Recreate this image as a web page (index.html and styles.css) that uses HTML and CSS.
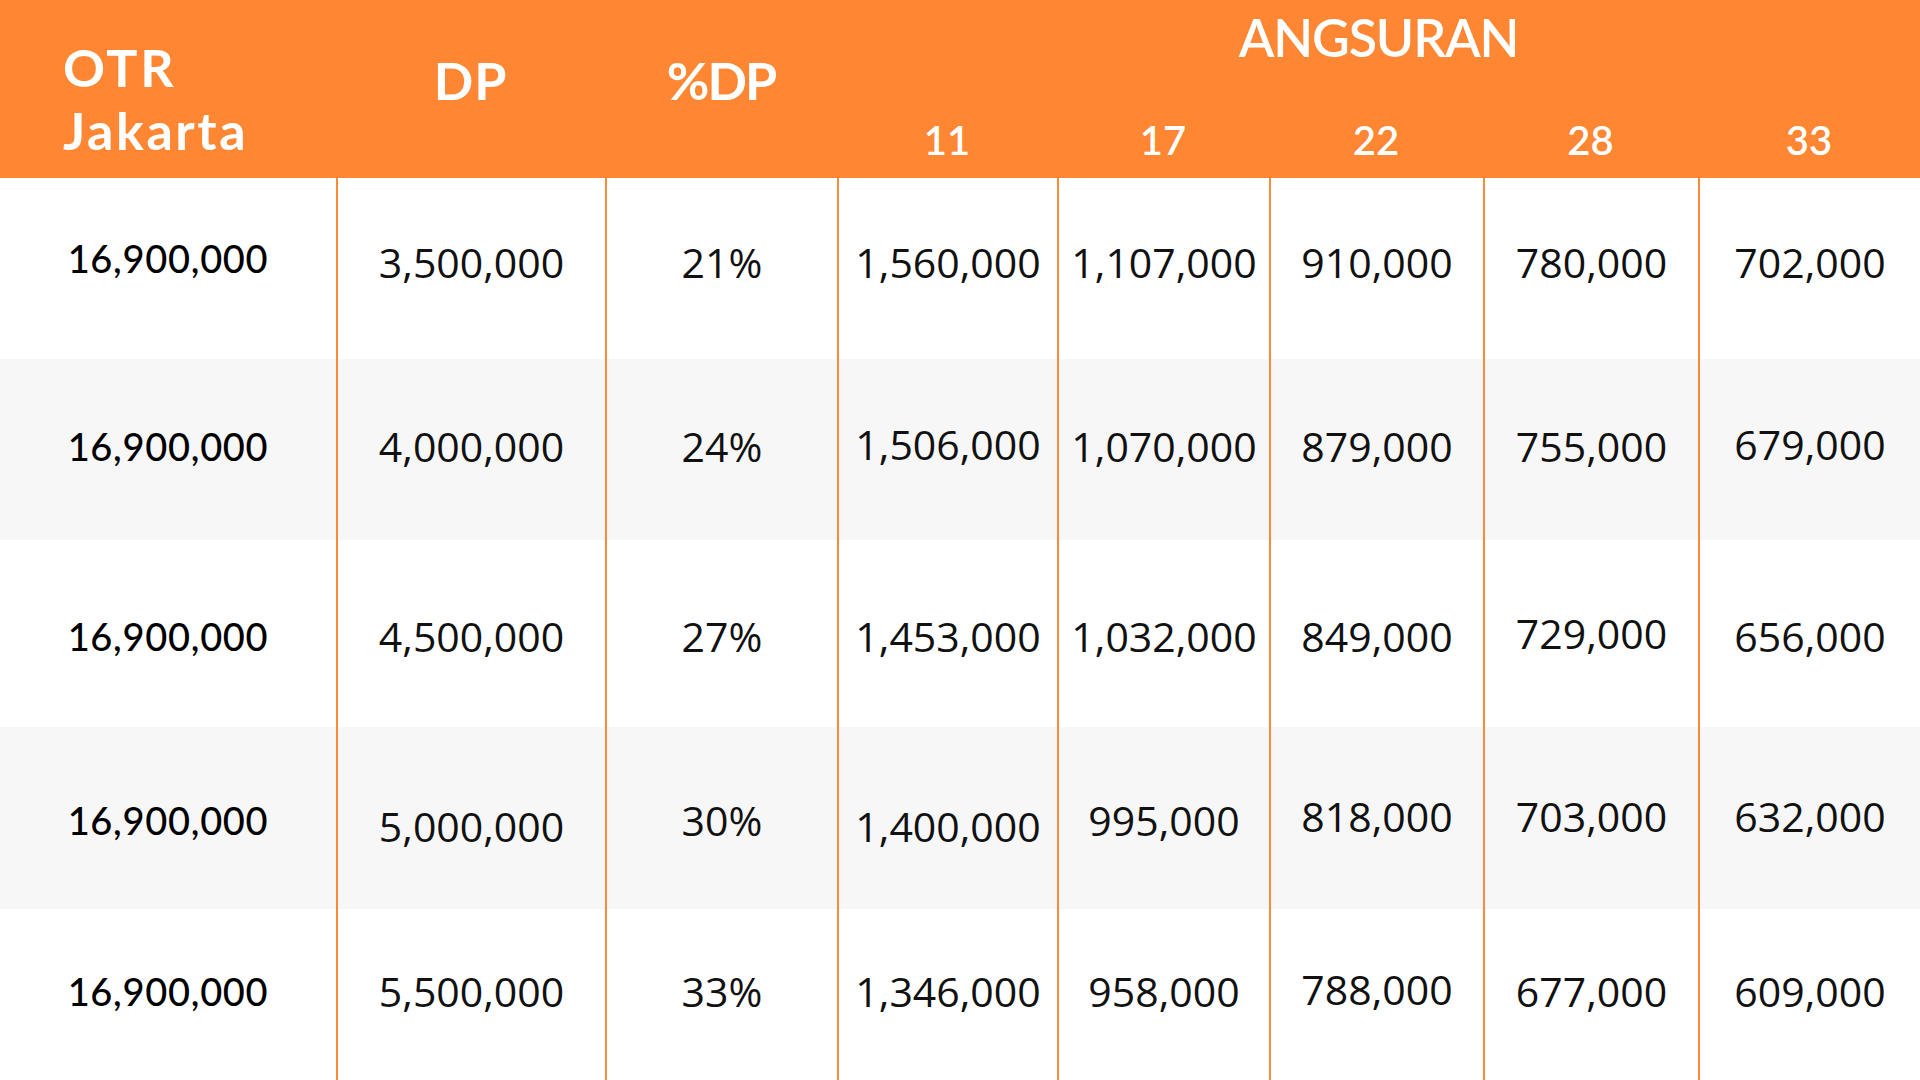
FILE: index.html
```html
<!DOCTYPE html>
<html lang="id">
<head>
<meta charset="utf-8">
<title>Tabel Angsuran</title>
<link rel="stylesheet" href="styles.css">
</head>
<body>
<div class="table">
  <div class="head">
    <div class="h-otr">OTR<br>Jakarta</div>
    <div class="h-dp">DP</div>
    <div class="h-pdp">%DP</div>
    <div class="h-ang">ANGSURAN</div>
    <div class="h-n">11</div>
    <div class="h-n">17</div>
    <div class="h-n">22</div>
    <div class="h-n">28</div>
    <div class="h-n">33</div>
  </div>
  <div class="body">
    <div class="row r1">
      <div class="cell otr"><span class="up2">16,900,000</span></div>
      <div class="cell"><span>3,500,000</span></div>
      <div class="cell"><span>21%</span></div>
      <div class="cell"><span>1,560,000</span></div>
      <div class="cell"><span>1,107,000</span></div>
      <div class="cell"><span>910,000</span></div>
      <div class="cell"><span>780,000</span></div>
      <div class="cell"><span>702,000</span></div>
    </div>
    <div class="row r2 alt">
      <div class="cell otr"><span>16,900,000</span></div>
      <div class="cell"><span>4,000,000</span></div>
      <div class="cell"><span>24%</span></div>
      <div class="cell"><span class="up1">1,506,000</span></div>
      <div class="cell"><span>1,070,000</span></div>
      <div class="cell"><span>879,000</span></div>
      <div class="cell"><span>755,000</span></div>
      <div class="cell"><span class="up1">679,000</span></div>
    </div>
    <div class="row r3">
      <div class="cell otr"><span>16,900,000</span></div>
      <div class="cell"><span>4,500,000</span></div>
      <div class="cell"><span>27%</span></div>
      <div class="cell"><span>1,453,000</span></div>
      <div class="cell"><span>1,032,000</span></div>
      <div class="cell"><span>849,000</span></div>
      <div class="cell"><span class="up1">729,000</span></div>
      <div class="cell"><span>656,000</span></div>
    </div>
    <div class="row r4 alt">
      <div class="cell otr"><span>16,900,000</span></div>
      <div class="cell"><span class="dn3">5,000,000</span></div>
      <div class="cell"><span>30%</span></div>
      <div class="cell"><span class="dn3">1,400,000</span></div>
      <div class="cell"><span>995,000</span></div>
      <div class="cell"><span class="up2">818,000</span></div>
      <div class="cell"><span class="up2">703,000</span></div>
      <div class="cell"><span class="up2">632,000</span></div>
    </div>
    <div class="row r5">
      <div class="cell otr"><span>16,900,000</span></div>
      <div class="cell"><span>5,500,000</span></div>
      <div class="cell"><span>33%</span></div>
      <div class="cell"><span>1,346,000</span></div>
      <div class="cell"><span>958,000</span></div>
      <div class="cell"><span class="up1">788,000</span></div>
      <div class="cell"><span>677,000</span></div>
      <div class="cell"><span>609,000</span></div>
    </div>
  </div>
</div>
</body>
</html>
```
FILE: styles.css
```css
html, body {
  margin: 0;
  padding: 0;
  background: #ffffff;
}

.table {
  width: 1920px;
  height: 1080px;
  overflow: hidden;
  --cols: 336px 269px 232px 220px 212px 214px 215px 222px;
}

.head {
  display: grid;
  grid-template-columns: var(--cols);
  grid-template-rows: 100px 78px;
  height: 178px;
  background: #ff8632;
  color: #ffffff;
  font-family: "Lato", "Noto Sans", sans-serif;
  font-weight: 700;
}

.h-otr {
  grid-column: 1;
  grid-row: 1 / span 2;
  padding: 36px 0 0 63px;
  font-size: 52px;
  line-height: 63px;
  letter-spacing: 2.6px;
}

.h-dp,
.h-pdp {
  grid-row: 1 / span 2;
  padding-top: 49px;
  font-size: 52px;
  line-height: 1.2;
  text-align: center;
}

.h-dp {
  grid-column: 2;
  letter-spacing: 1px;
}

.h-pdp {
  grid-column: 3;
  letter-spacing: -2px;
}

.h-ang {
  grid-column: 4 / span 5;
  grid-row: 1;
  padding-top: 6px;
  font-size: 52px;
  line-height: 1.2;
  text-align: center;
  letter-spacing: -1.2px;
  font-weight: 600;
}

.h-n {
  grid-row: 2;
  padding-top: 16px;
  font-size: 40px;
  line-height: 1.2;
  text-align: center;
  font-weight: 600;
}

.body {
  display: grid;
  grid-template-rows: 181px 181px 187px 182px 171px;
}

.row {
  display: grid;
  grid-template-columns: var(--cols);
  background: #ffffff;
}

.row.alt {
  background: #f7f7f7;
}

.cell {
  display: flex;
  align-items: center;
  justify-content: center;
  font-family: "Open Sans", "Noto Sans", sans-serif;
  font-size: 41px;
  color: #111111;
  border-left: 2px solid #fb8a3a;
}

.cell.otr {
  border-left: none;
  font-family: "Lato", "Noto Sans", sans-serif;
  font-weight: 500;
  font-size: 38px;
  letter-spacing: 0.7px;
  color: #000000;
}

.r1 .cell { padding-bottom: 13px; }
.r2 .cell { padding-bottom: 7px; }
.r3 .cell { padding-top: 4px; }
.r4 .cell { padding-top: 3px; }
.r5 .cell { padding-bottom: 7px; }

.up1 { margin-bottom: 5px; }
.up2 { margin-bottom: 8px; }
.dn3 { margin-top: 12px; }
```
